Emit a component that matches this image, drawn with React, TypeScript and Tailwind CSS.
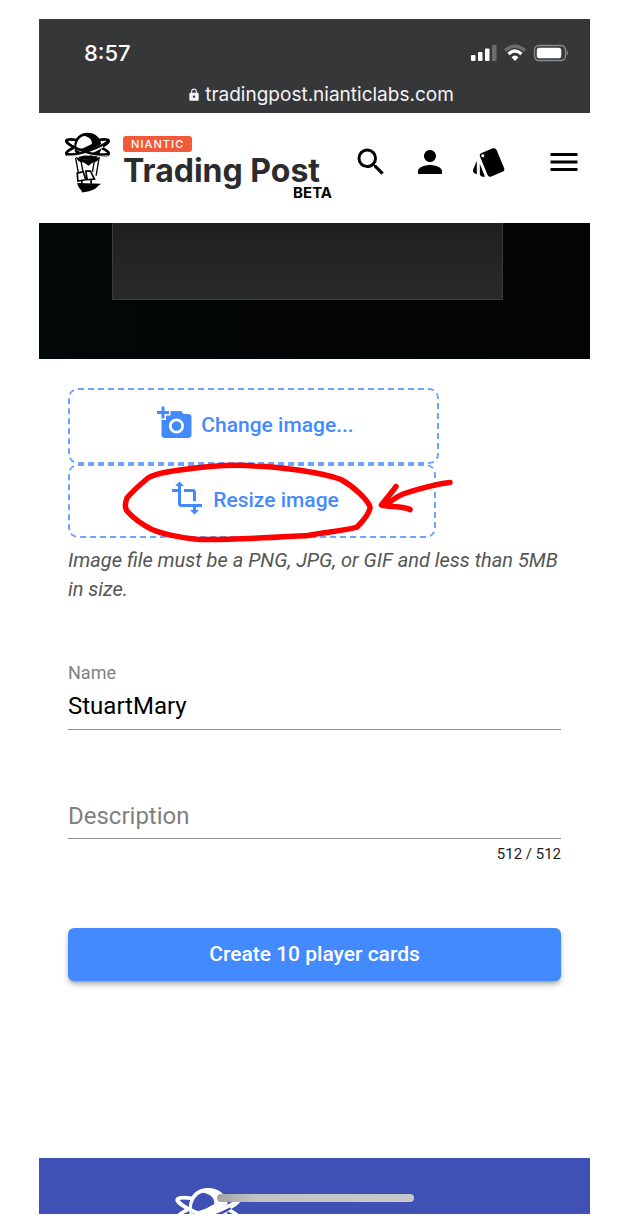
import React, { useState } from 'react';
import { MdAddAPhoto, MdLock, MdMenu, MdPerson, MdSearch, MdStyle, MdTransform } from 'react-icons/md';

const MAX_DESCRIPTION = 512;

function StatusBar() {
  return (
    <div className="bg-[#363739] px-[21px] pt-5 pb-1 text-white font-['Inter',sans-serif]">
      <div className="flex items-center justify-between">
        <span className="pl-6 text-[22px] leading-7 font-medium">8:57</span>
        <svg className="h-[18px] w-[99px]" viewBox="0 0 99 18" fill="none">
          <rect x="1" y="11" width="4.5" height="6" rx="1" fill="#fff" />
          <rect x="8" y="8" width="4.5" height="9" rx="1" fill="#fff" />
          <rect x="15" y="4.5" width="4.5" height="12.5" rx="1" fill="#fff" />
          <rect x="22" y="1" width="4.5" height="16" rx="1" fill="#6b6c6e" />
          <path d="M35 6.5 Q45 -2 55 6.5" stroke="#6b6c6e" strokeWidth="3.4" />
          <path d="M38.5 10 Q45 4 51.5 10" stroke="#fff" strokeWidth="3.2" />
          <path d="M41.5 13.2 Q45 10 48.5 13.2 L45 17 Z" fill="#fff" />
          <rect x="64.5" y="1.5" width="31" height="15" rx="4.5" stroke="#8a8b8d" strokeWidth="1.4" />
          <rect x="66.8" y="3.7" width="24.5" height="10.6" rx="2.5" fill="#fff" />
          <path d="M97 6.5 Q99.5 9 97 11.5 Z" fill="#8a8b8d" />
        </svg>
      </div>
      <div className="mt-3.5 flex items-center justify-center gap-1 pl-3 text-[19px] leading-7 text-gray-100">
        <MdLock className="size-3.5" />
        <span>tradingpost.nianticlabs.com</span>
      </div>
    </div>
  );
}

function BalloonMark({ className, ground }: { className: string; ground: string }) {
  return (
    <svg className={className} viewBox="0 0 142 184" fill="none">
      <ellipse cx="71" cy="46" rx="67" ry="14" transform="rotate(17 71 46)" stroke="currentColor" strokeWidth="8" />
      <ellipse cx="71" cy="46" rx="67" ry="14" transform="rotate(-17 71 46)" stroke="currentColor" strokeWidth="8" />
      <path d="M31 44 C31 16 49 2 71 2 C94 2 112 16 113 42 C113 60 102 74 94 84 L50 84 C40 72 31 62 31 44 Z" fill="currentColor" />
      <path d="M37 44 C39 26 48 15 60 12 C76 14 86 24 84 36 C72 42 58 50 50 50 C44 49 40 47 37 44 Z" fill={ground} />
      <path d="M50 62 C58 60 66 58 74 57 C82 59 86 61 90 64 C82 74 62 74 50 62 Z" fill={ground} />
      <path d="M30 47 C60 66 96 76 132 70" stroke={ground} strokeWidth="4" />
      <path d="M10 70 C50 74 94 56 116 41" stroke={ground} strokeWidth="12" />
      <path d="M6 26 C22 50 92 76 136 66" stroke="currentColor" strokeWidth="7" />
      <path d="M6 66 C46 74 110 46 136 26" stroke="currentColor" strokeWidth="7" />
      <path d="M34 74 C50 82 60 84 71 83 C84 83 96 80 110 74 L100 88 L86 93 L74 102 L61 93 L44 88 Z" fill="currentColor" />
      <path d="M35 78 L44 126 M51 86 L57 118 M92 86 L86 120 M106 78 L97 132" stroke="currentColor" strokeWidth="4" />
      <path d="M40 124 L58 120 L66 144 L42 148 Z M66 118 L80 118 L92 142 L70 144 Z" fill={ground} stroke="currentColor" strokeWidth="5" />
      <path d="M54 146 V158 M82 142 V158" stroke="currentColor" strokeWidth="5" />
      <path d="M40 154 L112 156 L102 164 C96 174 84 176 76 179 L54 183 C56 174 42 172 40 154 Z" fill="currentColor" />
    </svg>
  );
}

function Header() {
  return (
    <header className="flex items-start justify-between bg-white pt-[19px] pr-2 pb-6 pl-[25px]">
      <a href="#" className="flex items-start gap-3 font-['Inter',sans-serif]">
        <BalloonMark className="h-[61px] w-[47px] text-black" ground="#fff" />
        <span className="flex flex-col items-start pt-1">
          <span className="rounded-[3px] bg-[#f15a38] px-2 text-[11px] leading-4 font-medium tracking-widest text-white">
            NIANTIC
          </span>
          <span className="mt-[3px] text-[32px] leading-8 font-bold text-[#2c2c2e]">Trading Post</span>
          <span className="-mr-3 self-end text-[15px] leading-3 font-bold text-black">BETA</span>
        </span>
      </a>
      <nav className="flex items-center pt-3 text-black">
        <button type="button" aria-label="Search" className="mr-[23px]">
          <MdSearch className="size-9" />
        </button>
        <button type="button" aria-label="Account" className="mr-[23px]">
          <MdPerson className="size-9" />
        </button>
        <button type="button" aria-label="Cards" className="mr-[39px]">
          <MdStyle className="size-9" />
        </button>
        <button type="button" aria-label="Menu">
          <MdMenu className="size-9" />
        </button>
      </nav>
    </header>
  );
}

// Hand-drawn circle and arrow pointing out the resize button
function Annotation() {
  return (
    <svg
      className="pointer-events-none absolute top-0 left-0 h-[160px] w-[400px]"
      viewBox="68 388 400 160"
      fill="none"
      stroke="#ff0000"
      strokeWidth="5.5"
      strokeLinecap="round"
      strokeLinejoin="round"
    >
      <path d="M357 527 C364 520 370 512 370 507 C368 500 353 486 341 479.5 C320 472 280 467 255 466 C230 464 200 467 180 470 C165 472 154 474 148 478 C142 483 131 493 127 498 C125 503 125 508 127 511 C134 519 143 525 152 529.5 C165 535 190 539 200 539.5 C235 540 280 537 308 535.5 C325 532 345 531 357 527" />
      <path d="M450 482.5 C440 483 415 490 403 494 C396 497 391 501 387 504" />
      <path d="M396 486.5 C393 491 384 501 381.5 505 C388 507 404 506 410 509.5" />
    </svg>
  );
}

export default function App() {
  const [name, setName] = useState('StuartMary');
  const [description, setDescription] = useState('');

  return (
    <div className="min-h-screen bg-white pt-[19px] pr-[29px] pb-4 pl-[39px] font-['Roboto',sans-serif]">
      <StatusBar />
      <Header />

      <div className="bg-linear-to-r from-[#020708] to-[#040404] pr-[87px] pb-[59px] pl-[73px]">
        <div className="h-[77px] border border-t-0 border-[#3c3c3c] bg-linear-to-b from-[#1f1f1f] to-[#2a2a2a]" />
      </div>

      <main className="px-[29px] pt-[29px] pb-[177px]">
        <div className="relative flex flex-col items-start text-[21px] font-medium text-[#448aff]">
          <button
            type="button"
            className="flex h-[76px] w-[371px] max-w-full items-center justify-center gap-2 rounded-[10px] border-2 border-dashed border-[#6ea3fb] pl-1"
          >
            <MdAddAPhoto className="mb-1.5 size-9" />
            Change image...
          </button>
          <button
            type="button"
            className="flex h-[74px] w-[368px] max-w-full items-center justify-center gap-2 rounded-[10px] border-2 border-dashed border-[#6ea3fb] pl-1"
          >
            <MdTransform className="mb-1.5 size-9" />
            Resize image
          </button>
          <Annotation />
        </div>
        <p className="mt-2 text-xl leading-[29px] text-[#555] italic">
          Image file must be a PNG, JPG, or GIF and less than 5MB in size.
        </p>

        <div className="mt-[57px]">
          <label htmlFor="name" className="block text-lg leading-6 text-[#7f7f7f]">
            Name
          </label>
          <input
            id="name"
            className="block h-[45px] w-full border-b border-[#8f8f8f] pb-0.5 text-2xl text-black outline-none"
            value={name}
            onChange={(e) => setName(e.target.value)}
          />
        </div>

        <div className="mt-[63px]">
          <input
            id="description"
            aria-label="Description"
            className="block h-[46px] w-full border-b border-[#8f8f8f] text-2xl text-black outline-none placeholder:text-[#7f7f7f]"
            placeholder="Description"
            maxLength={MAX_DESCRIPTION}
            value={description}
            onChange={(e) => setDescription(e.target.value)}
          />
          <p className="mt-1 text-right text-[15px] leading-[22px] text-[#1c1c1c]">
            {MAX_DESCRIPTION - description.length} / {MAX_DESCRIPTION}
          </p>
        </div>

        <button
          type="button"
          className="mt-[63px] h-[53px] w-full rounded-md bg-[#448aff] text-[21px] font-medium text-white shadow-md shadow-black/30"
        >
          Create 10 player cards
        </button>
      </main>

      <footer className="relative h-14 overflow-hidden bg-[#3f51b5] pt-[29px] pl-[135px]">
        <BalloonMark className="h-[88px] w-[68px] text-white" ground="#3f51b5" />
        <div className="absolute bottom-3 left-[178px] h-2 w-[197px] rounded-full bg-linear-to-r from-[#a3a3a3] via-[#c4c4c4] via-20% to-[#c8c8c8]" />
      </footer>
    </div>
  );
}
